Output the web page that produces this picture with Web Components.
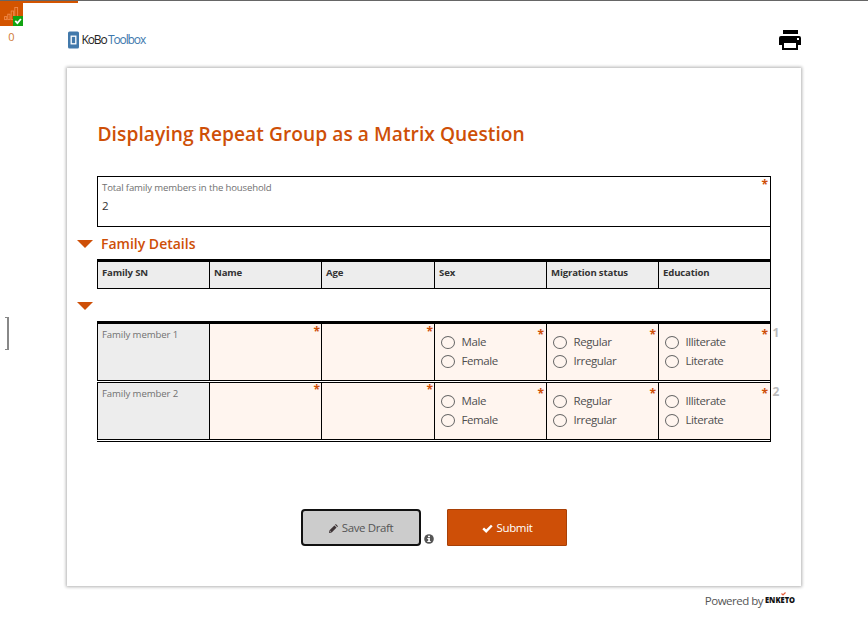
<!DOCTYPE html>
<html lang="en">
<head>
<meta charset="utf-8">
<title>Displaying Repeat Group as a Matrix Question</title>
<style>
html, body { margin: 0; height: 625px; overflow: hidden; background: #fff; }
body { font-family: "Open Sans", "Noto Sans", sans-serif; color: #4f4f4f; font-size: 12px; }
</style>
</head>
<body>
<enketo-page></enketo-page>
<script>
const define = (name, html) => {
  const t = document.createElement('template');
  t.innerHTML = html;
  customElements.define(name, class extends HTMLElement {
    constructor() {
      super();
      this.attachShadow({ mode: 'open' }).append(t.content.cloneNode(true));
    }
  });
};

define('status-rail', `
<style>
:host { display: block; width: 67px; position: relative; }
.bar { width: 78px; height: 2px; background: #d35400; }
.signal { position: relative; width: 23px; height: 23px; background: #d35400; }
svg { display: block; width: 23px; height: 23px; }
.count { width: 23px; text-align: center; font-size: 11px; line-height: 16px; margin-top: 3px; color: #cf7a35; }
.handle { box-sizing: border-box; width: 9px; height: 33px; margin-top: 272px; }
</style>
<div class="bar"></div>
<div class="signal"><svg viewBox="0 0 23 23">
<g fill="none" stroke="#f08a4b" stroke-width=".9"><rect x="4.6" y="13.6" width="2.2" height="3"/><rect x="7.8" y="11.2" width="2.2" height="5.4"/><rect x="11.2" y="8" width="2.4" height="8.6"/><rect x="14.8" y="4.5" width="2.8" height="12"/></g>
<rect x="13" y="13" width="10" height="10" fill="#12a312"/><path d="M15.3 17.8l2.1 2.3 3.5-4.1" fill="none" stroke="#fff" stroke-width="1.8"/></svg></div>
<div class="count">0</div>
<svg class="handle" viewBox="0 0 9 33"><path d="M5 0.5H9M5 32.5H9" stroke="#888"/><rect x="7" width="2" height="33" fill="#888"/></svg>
`);

define('kobo-logo', `
<style>
:host { display: flex; align-items: center; gap: 2.5px; height: 18px; padding-left: 1px; font: 12px/18px "Open Sans", sans-serif; letter-spacing: -1.13px; color: #222; }
svg { display: block; }
b { font-weight: 400; color: #3c78ad; margin-left: 1.5px; }
</style>
<svg width="11" height="18" viewBox="0 0 11 18"><rect width="11" height="17" y=".5" rx="1.5" fill="#4279ab"/><rect x="3.2" y="5.2" width="4.6" height="7.6" fill="#4279ab" stroke="#fff" stroke-width="1.3"/></svg>
<span>KoBo<b>Toolbox</b></span>
`);

define('print-button', `
<style>:host { display: block; width: 22px; height: 20px; } svg { display: block; }</style>
<svg width="22" height="20" viewBox="0 0 22 20"><path d="M4 0h15v4H4z"/><path d="M2 6h18q2 0 2 2v7h-3v5H3v-5H0V8q0-2 2-2z"/><rect x="5" y="13" width="12" height="5" fill="#fff"/><rect x="18" y="8" width="2" height="2" fill="#fff"/></svg>
`);

define('group-heading', `
<style>
:host { display: flex; align-items: center; margin-left: -20px; color: #ce4f07; font-size: 14px; font-weight: 600; line-height: 20px; height: 20px; }
svg { display: block; width: 16px; height: 8px; margin-right: 8px; }
</style>
<svg viewBox="0 0 16 8"><path d="M0 0h16L8 8z" fill="#ce4f07"/></svg><span><slot></slot></span>
`);

define('req-star', `
<style>:host { display: block; position: absolute; right: 2px; top: var(--star-top, 0px); color: #ce4f07; font: 700 12px/16px "Open Sans", sans-serif; }</style>*
`);

define('text-question', `
<style>
:host { display: block; position: relative; box-sizing: border-box; height: 51px; border: 1px solid #000; padding: 3px 4px; }
.label { font-size: 9.6px; line-height: 15px; color: #717171; letter-spacing: -.15px; }
.value { font-size: 11.5px; line-height: 20px; margin-top: 1px; color: #333; }
</style>
<div class="label"><slot name="label"></slot></div><div class="value"><slot></slot></div><req-star></req-star>
`);

define('matrix-row', `
<style>
:host { display: grid; grid-template-columns: 112px 112px 113px 112px 112px 112px; position: relative; border-left: 1px solid #000; }
</style><slot></slot>
`);

define('head-cell', `
<style>
:host { display: block; height: 26px; background: #ededed; border-right: 1px solid #000; box-sizing: border-box; padding: 3px 4px; font-size: 9.6px; font-weight: 700; line-height: 15px; letter-spacing: -.15px; color: #333; }
</style><slot></slot>
`);

define('name-cell', `
<style>
:host { display: block; height: 56px; background: #ededed; border-right: 1px solid #000; box-sizing: border-box; padding: 3px 4px; font-size: 9.6px; line-height: 15px; letter-spacing: -.1px; color: #717171; }
</style><slot></slot>
`);

define('input-cell', `
<style>
:host { display: block; position: relative; height: 56px; background: #fff5ef; border-right: 1px solid #000; box-sizing: border-box; }
:host([raised]) { --star-top: -1px; }
req-star { right: 1px; }
</style><req-star></req-star>
`);

define('choice-cell', `
<style>
:host { --star-top: 3px; display: flex; flex-direction: column; position: relative; height: 56px; background: #fff5ef; border-right: 1px solid #000; box-sizing: border-box; padding: 9px 0 0 6px; }
</style><slot></slot><req-star></req-star>
`);

define('radio-option', `
<style>
:host { display: flex; align-items: center; gap: 6px; height: 19px; font-size: 11.5px; line-height: 17px; letter-spacing: -.4px; color: #4f4f4f; }
i { box-sizing: border-box; width: 14px; height: 13px; border: 1px solid #666; border-radius: 50%; }
span { padding: 0 0 2px .5px; }
</style><i></i><span><slot></slot></span>
`);

define('row-number', `
<style>:host { position: absolute; left: 674.5px; top: 0; font-size: 12px; font-weight: 700; line-height: 18px; color: #bbb; }</style><slot></slot>
`);

define('form-actions', `
<style>
:host { display: flex; justify-content: center; align-items: flex-end; height: 37px; }
.btn { box-sizing: border-box; width: 120px; height: 37px; display: flex; align-items: center; justify-content: center; gap: 4px; font-size: 11.5px; letter-spacing: -.38px; padding-top: 1px; }
.btn span { padding-bottom: 2px; }
.draft { background: #ccc; border: 2px solid #111; border-radius: 4px; color: #555; }
.submit { background: #ce4f07; border: 1px solid #a84006; border-radius: 1px; color: #fff; }
.info { width: 10px; height: 10px; margin: 0 13px 2px 3px; }
</style>
<div class="btn draft"><svg width="9" height="9" viewBox="0 0 10 10"><path d="M0 10l.6-3L6 1.6 8.4 4 3 9.4z M6.7 .9L7.6 0 10 2.4l-.9.9z" fill="#3d3335"/><path d="M1 7.5L2.5 9" stroke="#ccc" stroke-width=".7"/></svg><span>Save Draft</span></div>
<svg class="info" viewBox="0 0 10 10"><circle cx="5" cy="5" r="4.8" fill="#555"/><path d="M4 1.7h2v1.5H4zM3.3 4h2.6v3h.8v1.1H3.3V7h.9V5h-.9z" fill="#fff"/></svg>
<div class="btn submit"><svg width="11" height="9" viewBox="0 0 11 9"><path d="M1.2 4.3L4.2 7.2 9.8 1.5" fill="none" stroke="#fff" stroke-width="2.4"/></svg><span>Submit</span></div>
`);

define('form-card', `
<style>
:host { display: block; box-sizing: border-box; width: 734px; height: 518px; padding: 51px 30px 0; background: #fff; box-shadow: 0 0 3px 1px rgba(0,0,0,.3); }
h1 { margin: 0; font-size: 19.2px; line-height: 30px; font-weight: 600; letter-spacing: .045px; padding-left: .5px; color: #ce4f07; white-space: nowrap; height: 57px; }
.grid { width: 674px; height: 266px; position: relative; background: linear-gradient(#000,#000) right top / 1px 100% no-repeat; }
.fam { margin-top: 7px; }
.space { height: 5px; }
.thick { height: 3px; width: 673px; background: #000; }
.thin { height: 1px; background: #000; }
.gap { height: 1px; }
.sub { margin-top: 7px; margin-bottom: 5px; }
form-actions { margin-top: 67px; }
</style>
<h1>Displaying Repeat Group as a Matrix Question</h1>
<div class="grid">
<text-question><span slot="label">Total family members in the household</span>2</text-question>
<group-heading class="fam">Family Details</group-heading>
<div class="space"></div><div class="thick"></div>
<matrix-row><head-cell>Family SN</head-cell><head-cell>Name</head-cell><head-cell>Age</head-cell><head-cell>Sex</head-cell><head-cell>Migration status</head-cell><head-cell>Education</head-cell></matrix-row>
<div class="thin"></div>
<group-heading class="sub"></group-heading>
<div class="thick"></div>
<matrix-row><name-cell>Family member 1</name-cell><input-cell></input-cell><input-cell></input-cell>
<choice-cell><radio-option>Male</radio-option><radio-option>Female</radio-option></choice-cell>
<choice-cell><radio-option>Regular</radio-option><radio-option>Irregular</radio-option></choice-cell>
<choice-cell><radio-option>Illiterate</radio-option><radio-option>Literate</radio-option></choice-cell><row-number>1</row-number></matrix-row>
<div class="thin"></div><div class="gap"></div><div class="thin"></div>
<matrix-row><name-cell>Family member 2</name-cell><input-cell raised></input-cell><input-cell raised></input-cell>
<choice-cell><radio-option>Male</radio-option><radio-option>Female</radio-option></choice-cell>
<choice-cell><radio-option>Regular</radio-option><radio-option>Irregular</radio-option></choice-cell>
<choice-cell><radio-option>Illiterate</radio-option><radio-option>Literate</radio-option></choice-cell><row-number>2</row-number></matrix-row>
<div class="thin"></div><div class="gap"></div><div class="thin"></div>
</div>
<form-actions></form-actions>
`);

define('enketo-brand', `
<style>
:host { display: flex; justify-content: flex-end; align-items: center; gap: 2px; height: 18px; font-size: 11.5px; letter-spacing: -.5px; color: #555; }
.e { position: relative; font: 800 9.5px/18px "Open Sans", sans-serif; letter-spacing: 0; color: #111; width: 30px; white-space: nowrap; }
.e span { display: inline-block; transform: scaleX(.79); transform-origin: 0 50%; }
svg { position: absolute; left: 16px; top: 1px; }
</style><span>Powered by</span><div class="e"><span>ENKETO</span><svg width="5" height="4" viewBox="0 0 5 4"><path d="M.5 1.5L2 3 4.5 .5" fill="none" stroke="#e8603c" stroke-width="1.2"/></svg></div>
`);

define('enketo-page', `
<style>
:host { display: block; box-sizing: border-box; width: 868px; height: 625px; border-top: 1px solid #666; }
.layout { display: grid; grid-template-columns: 67px 734px; }
header { display: flex; justify-content: space-between; align-items: center; height: 20px; padding-top: 29px; margin-bottom: 18px; }
enketo-brand { margin: 5px 6px 0 0; }
</style>
<div class="layout"><status-rail></status-rail><main><header><kobo-logo></kobo-logo><print-button></print-button></header><form-card></form-card><enketo-brand></enketo-brand></main></div>
`);
</script>
</body>
</html>
